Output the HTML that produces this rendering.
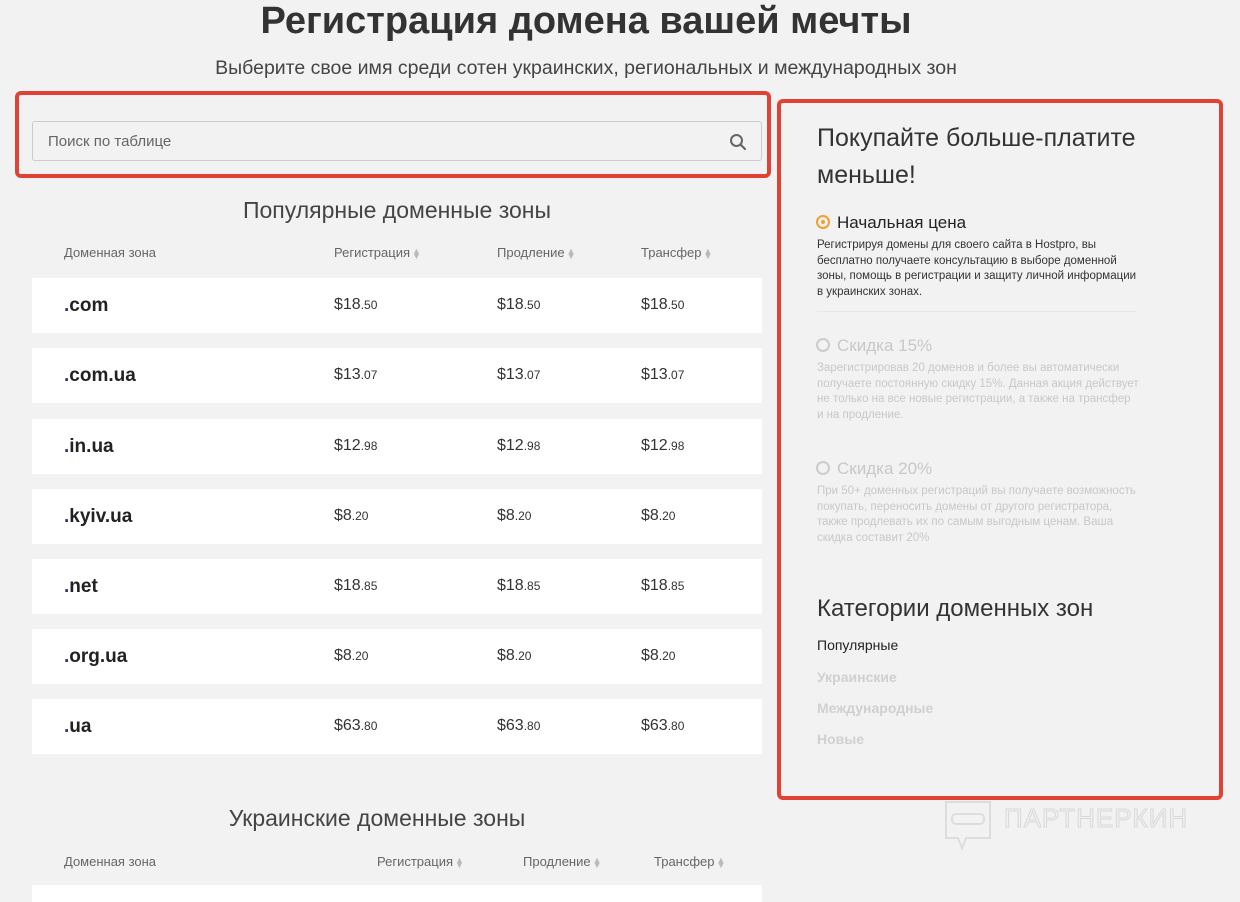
<!DOCTYPE html>
<html><head><meta charset="utf-8"><style>
*{margin:0;padding:0;box-sizing:border-box}
html,body{width:1240px;height:902px;overflow:hidden}
body{background:#f2f2f2;font-family:"Liberation Sans",sans-serif;color:#333;position:relative}
.a{position:absolute}
h1{position:absolute;left:0;width:1172px;top:0px;text-align:center;font-size:38px;line-height:42px;font-weight:bold;color:#333}
.sub{top:57px;left:0;width:1172px;text-align:center;font-size:19.5px;color:#444}
.redbox{border:4px solid #e04236;border-radius:6px}
.search{left:32px;top:121px;width:730px;height:40px;border:1px solid #ccc;border-radius:3px;font-size:15px;color:#666;padding:11px 15px;background:#f2f2f2}
.sec{left:32px;width:730px;text-align:center;font-size:23px;font-weight:300;color:#444}
.th{font-size:13px;color:#666}
.row{left:32px;width:730px;height:55px;background:#fff}
.row .d{position:absolute;left:32px;top:17px;font-size:19px;font-weight:bold;color:#222}
.row .d b{color:#2c3a6b}
.row .p{position:absolute;top:18px;font-size:16px;color:#333}
.row .p small{font-size:12px}
.arr{display:inline-block;color:#bbb;font-size:9px;line-height:5px;vertical-align:middle;margin-left:2px}
.rt{left:817px;font-size:11.5px;line-height:15.5px;color:#333;width:322px}
.gray{color:#c8c8c8}
</style></head><body>
<h1>Регистрация домена вашей мечты</h1>
<div class="a sub">Выберите свое имя среди сотен украинских, региональных и международных зон</div>
<div class="a redbox" style="left:15px;top:91px;width:756px;height:87px"></div>
<div class="a search">Поиск по таблице
<svg style="position:absolute;right:14px;top:11px" width="18" height="18" viewBox="0 0 18 18"><circle cx="7.5" cy="7.5" r="5.5" fill="none" stroke="#666" stroke-width="2"/><path d="M11.5 11.5L16 16" stroke="#666" stroke-width="2.2" stroke-linecap="round"/></svg></div>
<div class="a sec" style="top:197px">Популярные доменные зоны</div>
<div class="a th" style="left:64px;top:245px">Доменная зона</div>
<div class="a th" style="left:334px;top:245px">Регистрация<span class="arr">▲<br>▼</span></div>
<div class="a th" style="left:497px;top:245px">Продление<span class="arr">▲<br>▼</span></div>
<div class="a th" style="left:641px;top:245px">Трансфер<span class="arr">▲<br>▼</span></div>

<div class="a row" style="top:278px"><div class="d"><b>.</b>com</div><div class="p" style="left:302px">$18<small>.50</small></div><div class="p" style="left:465px">$18<small>.50</small></div><div class="p" style="left:609px">$18<small>.50</small></div></div>
<div class="a row" style="top:348px"><div class="d"><b>.</b>com.ua</div><div class="p" style="left:302px">$13<small>.07</small></div><div class="p" style="left:465px">$13<small>.07</small></div><div class="p" style="left:609px">$13<small>.07</small></div></div>
<div class="a row" style="top:419px"><div class="d"><b>.</b>in.ua</div><div class="p" style="left:302px">$12<small>.98</small></div><div class="p" style="left:465px">$12<small>.98</small></div><div class="p" style="left:609px">$12<small>.98</small></div></div>
<div class="a row" style="top:489px"><div class="d"><b>.</b>kyiv.ua</div><div class="p" style="left:302px">$8<small>.20</small></div><div class="p" style="left:465px">$8<small>.20</small></div><div class="p" style="left:609px">$8<small>.20</small></div></div>
<div class="a row" style="top:559px"><div class="d"><b>.</b>net</div><div class="p" style="left:302px">$18<small>.85</small></div><div class="p" style="left:465px">$18<small>.85</small></div><div class="p" style="left:609px">$18<small>.85</small></div></div>
<div class="a row" style="top:629px"><div class="d"><b>.</b>org.ua</div><div class="p" style="left:302px">$8<small>.20</small></div><div class="p" style="left:465px">$8<small>.20</small></div><div class="p" style="left:609px">$8<small>.20</small></div></div>
<div class="a row" style="top:699px"><div class="d"><b>.</b>ua</div><div class="p" style="left:302px">$63<small>.80</small></div><div class="p" style="left:465px">$63<small>.80</small></div><div class="p" style="left:609px">$63<small>.80</small></div></div>

<div class="a sec" style="top:805px;left:12px">Украинские доменные зоны</div>
<div class="a th" style="left:64px;top:854px">Доменная зона</div>
<div class="a th" style="left:377px;top:854px">Регистрация<span class="arr">▲<br>▼</span></div>
<div class="a th" style="left:523px;top:854px">Продление<span class="arr">▲<br>▼</span></div>
<div class="a th" style="left:654px;top:854px">Трансфер<span class="arr">▲<br>▼</span></div>
<div class="a row" style="top:885px;height:17px"></div>

<div class="a redbox" style="left:777px;top:99px;width:446px;height:701px"></div>
<div class="a" style="left:817px;top:120px;font-size:25px;font-weight:300;line-height:37px;color:#333">Покупайте больше-платите<br>меньше!</div>
<div class="a" style="left:816px;top:215px;width:14px;height:14px;border:2px solid #f0a030;border-radius:50%"><div style="position:absolute;left:3px;top:3px;width:4px;height:4px;background:#f0a030;border-radius:50%"></div></div>
<div class="a" style="left:837px;top:213px;font-size:17px;color:#222">Начальная цена</div>
<div class="a rt" style="top:238px">Регистрируя домены для своего сайта в Hostpro, вы бесплатно получаете консультацию в выборе доменной зоны, помощь в регистрации и защиту личной информации в украинских зонах.</div>
<div class="a" style="left:817px;top:311px;width:320px;height:1px;background:#e6e6e6"></div>
<div class="a" style="left:816px;top:338px;width:14px;height:14px;border:2px solid #ccc;border-radius:50%"></div>
<div class="a gray" style="left:837px;top:336px;font-size:17px">Скидка 15%</div>
<div class="a rt gray" style="top:361px">Зарегистрировав 20 доменов и более вы автоматически получаете постоянную скидку 15%. Данная акция действует не только на все новые регистрации, а также на трансфер и на продление.</div>
<div class="a" style="left:816px;top:461px;width:14px;height:14px;border:2px solid #ccc;border-radius:50%"></div>
<div class="a gray" style="left:837px;top:459px;font-size:17px">Скидка 20%</div>
<div class="a rt gray" style="top:484px">При 50+ доменных регистраций вы получаете возможность покупать, переносить домены от другого регистратора, также продлевать их по самым выгодным ценам. Ваша скидка составит 20%</div>
<div class="a" style="left:817px;top:595px;font-size:24px;font-weight:300;color:#333">Категории доменных зон</div>
<div class="a" style="left:817px;top:637px;font-size:14px;color:#222">Популярные</div>
<div class="a" style="left:817px;top:669px;font-size:14px;font-weight:bold;color:#d0d0d0">Украинские</div>
<div class="a" style="left:817px;top:700px;font-size:14px;font-weight:bold;color:#d0d0d0">Международные</div>
<div class="a" style="left:817px;top:731px;font-size:14px;font-weight:bold;color:#d0d0d0">Новые</div>
<svg class="a" style="left:944px;top:800px" width="50" height="52" viewBox="0 0 50 52"><path d="M2 2H46V38H22L18 48L14 38H2Z" fill="none" stroke="#ddd" stroke-width="2"/><rect x="8" y="14" width="32" height="10" rx="4" fill="none" stroke="#ddd" stroke-width="2"/></svg>
<div class="a" style="left:1004px;top:803px;font-size:26px;color:transparent;-webkit-text-stroke:1px #d8d8d8;letter-spacing:1px">ПАРТНЕРКИН</div>
</body></html>
